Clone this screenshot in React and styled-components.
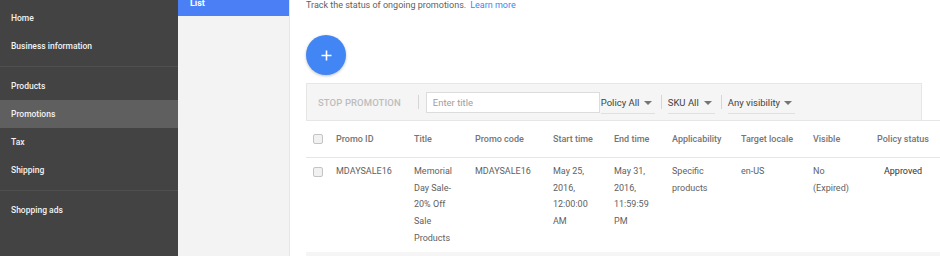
import React from 'react';
import styled, { createGlobalStyle } from 'styled-components';

const GlobalStyle = createGlobalStyle`
  html, body {
    margin: 0;
    padding: 0;
    background: #ffffff;
  }
  body {
    font-family: Roboto, "Liberation Sans", Arial, sans-serif;
    -webkit-font-smoothing: antialiased;
  }
`;

const COLUMNS = '30px 78px 61px 78px 61px 58px 69px 72px 64px 1fr';

const Page = styled.div`
  display: flex;
  width: 940px;
  height: 256px;
  overflow: hidden;
`;

const SideNav = styled.nav`
  width: 178px;
  flex-shrink: 0;
  background: #434343;
  display: flex;
  flex-direction: column;
`;

const NavSection = styled.div`
  padding: ${({ $first }) => ($first ? '4px 0 6px' : '5px 0 6px')};
  border-top: ${({ $first }) => ($first ? 'none' : '1px solid #505050')};
`;

const NavItem = styled.div`
  height: 28px;
  display: flex;
  align-items: center;
  padding-left: 11px;
  font-size: 8.5px;
  font-weight: 500;
  color: #f2f2f2;
  background: ${({ $active }) => ($active ? '#5f5f5f' : 'transparent')};
`;

const SubNav = styled.div`
  width: 111px;
  flex-shrink: 0;
  background: #f3f3f3;
  border-right: 1px solid #e6e6e6;
`;

const SubNavHeader = styled.div`
  height: 16px;
  background: #4a7ff6;
  color: #ffffff;
  font-size: 9px;
  font-weight: 700;
  line-height: 7px;
  padding-left: 12px;
`;

const Main = styled.main`
  flex: 1;
  padding-left: 16px;
  min-width: 0;
`;

const Intro = styled.p`
  margin: 0;
  font-size: 9px;
  line-height: 11px;
  color: #616161;
`;

const Link = styled.a`
  color: #4285f4;
  text-decoration: none;
  margin-left: 4px;
`;

const Fab = styled.button`
  display: flex;
  margin-top: 24px;
  width: 40px;
  height: 40px;
  border-radius: 50%;
  border: none;
  padding: 0;
  background: #4285f4;
  box-shadow: 0 1px 3px rgba(0, 0, 0, 0.25);
  align-items: center;
  justify-content: center;
`;

const Toolbar = styled.div`
  margin-top: 8px;
  width: 616px;
  height: 37px;
  box-sizing: border-box;
  background: #f5f5f5;
  border: 1px solid #e6e6e6;
  border-bottom: none;
  display: flex;
  align-items: center;
  padding-left: 11px;
`;

const StopButton = styled.span`
  font-size: 9.5px;
  font-weight: 500;
  color: #bdbdbd;
  letter-spacing: 0.1px;
`;

const Separator = styled.span`
  width: 1px;
  height: 14px;
  background: #d6d6d6;
  margin: ${({ $wide }) => ($wide ? '0 7px 0 17px' : '0 6px')};
`;

const TitleInput = styled.input`
  width: 174px;
  height: 21px;
  box-sizing: border-box;
  border: 1px solid #dcdcdc;
  background: #ffffff;
  padding: 0 6px;
  font-family: inherit;
  font-size: 9.5px;
  color: #424242;
  outline: none;
  margin-right: 1px;
  &::placeholder {
    color: #9e9e9e;
  }
`;

const Select = styled.div`
  width: ${({ $w }) => $w}px;
  height: 21px;
  box-sizing: border-box;
  margin-top: 2px;
  border-bottom: 1px solid #e0e0e0;
  display: flex;
  align-items: center;
  justify-content: space-between;
  font-size: 9.5px;
  color: #424242;
`;

const Caret = styled.span`
  width: 0;
  height: 0;
  border-left: 4px solid transparent;
  border-right: 4px solid transparent;
  border-top: 4px solid #757575;
  margin-right: 3px;
`;

const Table = styled.div`
  border-top: 1px solid #e6e6e6;
`;

const HeaderRow = styled.div`
  display: grid;
  grid-template-columns: ${COLUMNS};
  height: 36px;
  align-items: center;
  border-bottom: 1px solid #e6e6e6;
  font-size: 9px;
  font-weight: 500;
  color: #757575;
`;

const DataRow = styled.div`
  display: grid;
  grid-template-columns: ${COLUMNS};
  align-items: start;
  padding: 5px 0 5px;
  font-size: 9px;
  line-height: 16.7px;
  color: #616161;
`;

const Cell = styled.div`
  text-align: ${({ $center }) => ($center ? 'center' : 'left')};
  width: ${({ $center }) => ($center ? '52px' : 'auto')};
  color: ${({ $dark }) => ($dark ? '#333333' : 'inherit')};
`;

const Line = styled.span`
  display: block;
`;

const CheckBox = styled.span`
  display: block;
  width: 8px;
  height: 8px;
  margin: ${({ $inRow }) => ($inRow ? '4px 0 0 7px' : '0 0 0 7px')};
  border: 1px solid #c4c4c4;
  border-radius: 2px;
  background: #f1f1f1;
`;

const Footer = styled.div`
  height: 20px;
  background: #f5f5f5;
`;

const headers = [
  'Promo ID',
  'Title',
  'Promo code',
  'Start time',
  'End time',
  'Applicability',
  'Target locale',
  'Visible',
];

const promo = [
  ['MDAYSALE16'],
  ['Memorial', 'Day Sale-', '20% Off', 'Sale', 'Products'],
  ['MDAYSALE16'],
  ['May 25,', '2016,', '12:00:00', 'AM'],
  ['May 31,', '2016,', '11:59:59', 'PM'],
  ['Specific', 'products'],
  ['en-US'],
  ['No', '(Expired)'],
];

const navSections = [
  [{ label: 'Home' }, { label: 'Business information' }],
  [
    { label: 'Products' },
    { label: 'Promotions', active: true },
    { label: 'Tax' },
    { label: 'Shipping' },
  ],
  [{ label: 'Shopping ads' }],
];

const filters = [
  { label: 'Policy All', width: 54 },
  { label: 'SKU All', width: 47 },
  { label: 'Any visibility', width: 67 },
];

const App = () => {
  return (
    <Page>
      <GlobalStyle />
      <SideNav>
        {navSections.map((section, index) => (
          <NavSection key={index} $first={index === 0}>
            {section.map((item) => (
              <NavItem key={item.label} $active={item.active}>
                {item.label}
              </NavItem>
            ))}
          </NavSection>
        ))}
      </SideNav>
      <SubNav>
        <SubNavHeader>List</SubNavHeader>
      </SubNav>
      <Main>
        <Intro>
          Track the status of ongoing promotions.
          <Link href="#">Learn more</Link>
        </Intro>
        <Fab aria-label="Add promotion">
          <svg width="11" height="11" viewBox="0 0 11 11">
            <path d="M5.5 0.5v10M0.5 5.5h10" stroke="#ffffff" strokeWidth="1.6" />
          </svg>
        </Fab>
        <Toolbar>
          <StopButton>STOP PROMOTION</StopButton>
          <Separator $wide />
          <TitleInput placeholder="Enter title" />
          {filters.map((filter, index) => (
            <React.Fragment key={filter.label}>
              {index > 0 && <Separator />}
              <Select $w={filter.width}>
                {filter.label}
                <Caret />
              </Select>
            </React.Fragment>
          ))}
        </Toolbar>
        <Table>
          <HeaderRow>
            <CheckBox />
            {headers.map((header) => (
              <Cell key={header}>{header}</Cell>
            ))}
            <Cell $center>Policy status</Cell>
          </HeaderRow>
          <DataRow>
            <CheckBox $inRow />
            {promo.map((lines, index) => (
              <Cell key={index}>
                {lines.map((line) => (
                  <Line key={line}>{line}</Line>
                ))}
              </Cell>
            ))}
            <Cell $center $dark>Approved</Cell>
          </DataRow>
          <Footer />
        </Table>
      </Main>
    </Page>
  );
};

export default App;
